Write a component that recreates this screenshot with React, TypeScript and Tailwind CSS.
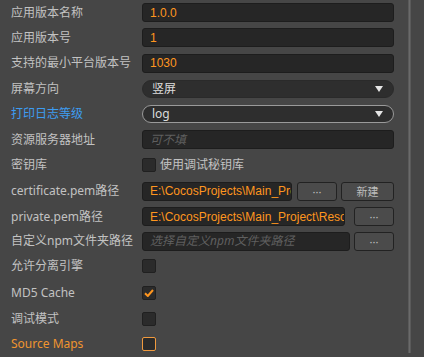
import React from "react";

const font = "font-['Noto_Sans','Noto_Sans_CJK_SC',sans-serif]";

// label + control, one row per setting; height tuned per row
const Row = ({
  label,
  h,
  tone = "text-[#c2c2c2]",
  children,
}: {
  label: string;
  h: string;
  tone?: string;
  children: React.ReactNode;
}) => (
  <div className={`flex items-center ${h}`}>
    <div className={`w-[131px] shrink-0 text-[12px] leading-none whitespace-nowrap ${tone}`}>{label}</div>
    <div className="flex min-w-0 flex-1 items-center gap-[4px]">{children}</div>
  </div>
);

const TextBox = ({
  value,
  placeholder,
}: {
  value?: string;
  placeholder?: string;
}) => (
  <div className="flex-1 h-[19px] min-w-0 overflow-hidden rounded-[3px] border border-[#1d1d1d] bg-[#262626] pl-[7px] flex items-center whitespace-nowrap text-[12px] leading-none">
    {value ? (
      <span className="block min-w-0 overflow-hidden text-clip leading-[16px] text-[#ff961f] font-['Liberation_Sans','Noto_Sans_CJK_SC',sans-serif]">
        {value}
      </span>
    ) : (
      <span className="italic text-[#5f5f5f]">{placeholder}</span>
    )}
  </div>
);

const Select = ({ value, focused }: { value: string; focused?: boolean }) => (
  <div
    className={`flex-1 h-[18px] rounded-[9px] flex items-center justify-between pl-[9px] pr-[10px] text-[12px] leading-none text-[#dcdcdc] bg-[#2e2e2e] border ${
      focused ? "border-[#9a9a9a]" : "border-[#2a2a2a]"
    }`}
  >
    <span>{value}</span>
    <svg width="8" height="6" viewBox="0 0 8 6">
      <path d="M0 0h8L4 6z" fill="#e6e6e6" />
    </svg>
  </div>
);

const Btn = ({ children, w }: { children: React.ReactNode; w: string }) => (
  <div
    className={`${w} h-[19px] shrink-0 rounded-[3px] border border-[#222] bg-[#4b4b4b] flex items-center justify-center text-[11px] leading-none text-[#bdbdbd]`}
  >
    {children}
  </div>
);

const Check = ({ checked, accent }: { checked?: boolean; accent?: boolean }) => (
  <div
    className={`w-[14px] h-[14px] shrink-0 rounded-[2px] bg-[#2b2b2b] border flex items-center justify-center ${
      accent ? "border-[#f09a3e]" : "border-[#202020]"
    }`}
  >
    {checked && (
      <svg width="10" height="8" viewBox="0 0 10 8">
        <path d="M1 4.2 3.8 7 9 1" fill="none" stroke="#ff961f" strokeWidth="2" />
      </svg>
    )}
  </div>
);

export default function App() {
  return (
    <div className={`w-[424px] h-[357px] bg-[#464646] flex overflow-hidden ${font}`}>
      <div className="w-[408px] shrink-0 pl-[11px] pr-[14px]">
        <Row label="应用版本名称" h="h-[25px]">
          <TextBox value="1.0.0" />
        </Row>
        <Row label="应用版本号" h="h-[25px]">
          <TextBox value="1" />
        </Row>
        <Row label="支持的最小平台版本号" h="h-[26px]">
          <TextBox value="1030" />
        </Row>
        <Row label="屏幕方向" h="h-[25px]">
          <Select value="竖屏" />
        </Row>
        <Row label="打印日志等级" h="h-[26px]" tone="text-[#3d9df2]">
          <Select value="log" focused />
        </Row>
        <Row label="资源服务器地址" h="h-[25px]">
          <TextBox placeholder="可不填" />
        </Row>
        <Row label="密钥库" h="h-[26px]">
          <Check />
          <span className="text-[12px] leading-none text-[#c2c2c2]">使用调试秘钥库</span>
        </Row>
        <Row label="certificate.pem路径" h="h-[26px]">
          <TextBox value="E:\CocosProjects\Main_Project\Resources" />
          <div className="flex gap-[4px] pl-[1px]">
            <Btn w="w-[40px]">···</Btn>
            <Btn w="w-[53px]">新建</Btn>
          </div>
        </Row>
        <Row label="private.pem路径" h="h-[25px]">
          <TextBox value="E:\CocosProjects\Main_Project\Resources" />
          <div className="pl-[5px]">
            <Btn w="w-[40px]">···</Btn>
          </div>
        </Row>
        <Row label="自定义npm文件夹路径" h="h-[24px]">
          <TextBox placeholder="选择自定义npm文件夹路径" />
          <Btn w="w-[40px]">···</Btn>
        </Row>
        <Row label="允许分离引擎" h="h-[26px]">
          <Check />
        </Row>
        <Row label="MD5 Cache" h="h-[27px]">
          <Check checked />
        </Row>
        <Row label="调试模式" h="h-[25px]">
          <Check />
        </Row>
        <Row label="Source Maps" h="h-[26px]" tone="text-[#f0952f]">
          <Check accent />
        </Row>
      </div>
      <div className="w-[3px] h-[353px] bg-[#6a6a6a] border-x border-[#5a5a5a]" />
    </div>
  );
}
